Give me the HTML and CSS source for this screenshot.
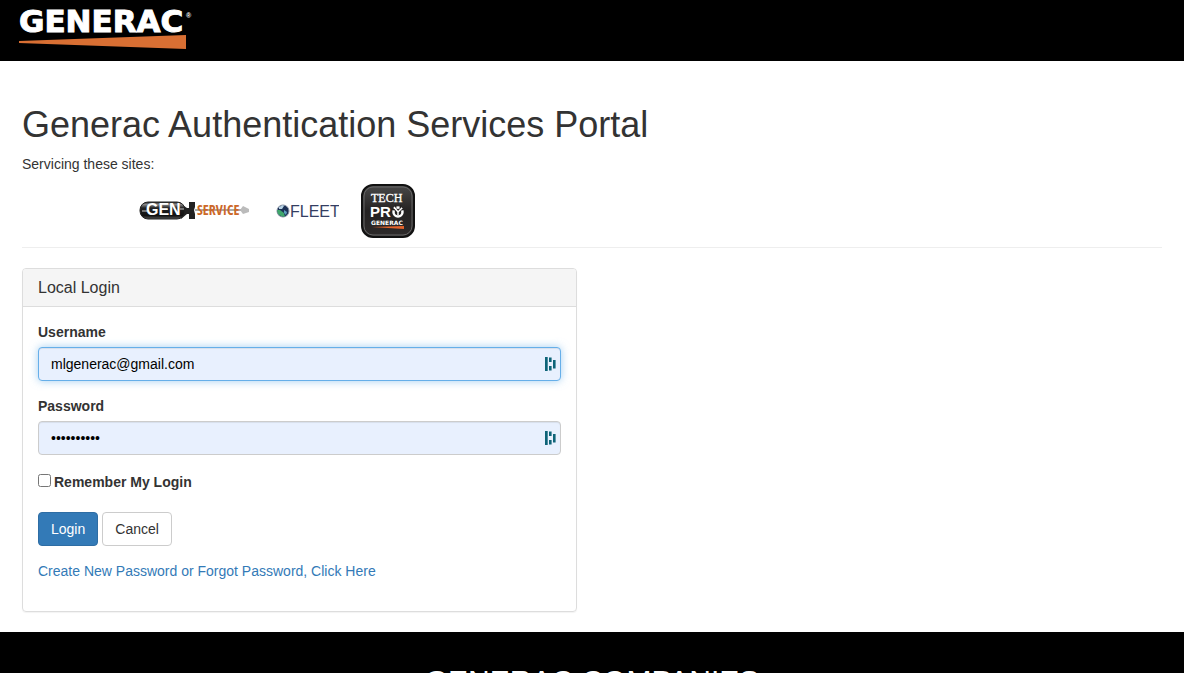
FILE: index.html
```html
<!DOCTYPE html>
<html lang="en">
<head>
<meta charset="UTF-8">
<meta name="viewport" content="width=device-width, initial-scale=1.0">
<title>Generac Authentication Services Portal</title>
<link rel="stylesheet" href="styles.css">
</head>
<body>
<header class="navbar">
  <a class="navbar-brand" href="#" aria-label="Generac">
    <svg width="180" height="46" viewBox="0 0 180 46">
      <text class="brand-text" x="0" y="26">GENERAC</text>
      <text class="brand-mark" x="167" y="12">®</text>
      <path fill="#d86f33" d="M0 35 L167 29 V43 L0 37 Z"/>
    </svg>
  </a>
</header>

<main class="container">
  <div class="page-header">
    <h1>Generac Authentication Services Portal</h1>
    <p>Servicing these sites:</p>
    <div class="sites">
      <svg class="site-gen" width="112" height="24" viewBox="0 0 112 24">
        <defs>
          <linearGradient id="barrel" x1="0" y1="0" x2="0" y2="1">
            <stop offset="0" stop-color="#222"/>
            <stop offset=".15" stop-color="#888"/>
            <stop offset=".35" stop-color="#222"/>
            <stop offset=".8" stop-color="#111"/>
            <stop offset="1" stop-color="#555"/>
          </linearGradient>
        </defs>
        <path fill="#aaa" d="M56 10h46v2H56z"/>
        <path fill="#bbb" d="M101 11l3-4 6 3v3l-6 2z"/>
        <path fill="#222" d="M42 5l6 4h2V3h6v5l-1 3 1 4v5h-6v-5h-2l-6 5z"/>
        <rect x="1" y="3" width="45" height="17" rx="8" fill="url(#barrel)" stroke="#222"/>
        <path fill="none" stroke="#ccc" d="M3 12h5M41 10h4"/>
        <text class="gen-text" x="7" y="16">GEN</text>
        <text class="service-text" x="58" y="16">SERVICE</text>
      </svg>
      <svg class="site-fleet" width="63" height="20" viewBox="0 0 63 20">
        <circle cx="7" cy="10" r="6" fill="#1c3157" stroke="#8a93a5"/>
        <path fill="#3fa66b" d="M1 9l3 0 4 3 1 4-4-1-3-2z"/>
        <path fill="#b8d3e5" d="M3 6l4-2 1 1-2 3-3 0z"/>
        <path fill="#5b9fc0" d="M8 9l3 2-1 3-2-2z"/>
        <text class="fleet-text" x="14" y="16">FLEET</text>
      </svg>
      <svg class="site-tech" width="54" height="54" viewBox="0 0 54 54">
        <defs>
          <linearGradient id="tile" x1="0" y1="0" x2="0" y2="1">
            <stop offset="0" stop-color="#494949"/>
            <stop offset=".5" stop-color="#242222"/>
            <stop offset="1" stop-color="#2d2a2a"/>
          </linearGradient>
        </defs>
        <rect x="1" y="1" width="52" height="52" rx="11" fill="url(#tile)" stroke="#111" stroke-width="2"/>
        <rect x="3" y="3" width="48" height="48" rx="9" fill="none" stroke="#666"/>
        <text class="tech-text" x="10" y="18">TECH</text>
        <text class="pro-text" x="9" y="33">PR</text>
        <circle cx="37" cy="28" r="4.500" fill="none" stroke="#fff" stroke-width="2.500"/>
        <path stroke="#242222" stroke-width="1.500" d="M34 21l1 4M40 21l-1 4M31 25l3 1M43 25l-3 1"/>
        <path fill="none" stroke="#fff" stroke-width="1.500" d="M33 23l4 5 4-4M37 28v3"/>
        <text class="tech-brand" x="10" y="41">GENERAC</text>
        <path fill="#e5642b" d="M11 43l32-1v3z"/>
      </svg>
    </div>
  </div>

  <section class="panel">
    <h2 class="panel-heading">Local Login</h2>
    <form class="panel-body">
      <div class="form-group">
        <label for="username">Username</label>
        <div class="field">
          <input class="form-control focused" type="text" id="username" value="mlgenerac@gmail.com">
          <svg class="field-icon" width="12" height="16" viewBox="0 0 12 16">
            <path fill="#0e6478" d="M1 1h2.700v14H1zM5 1.500h2.600v4.500H5zM5 10h2.600v4.500H5zM9 4h2.600v8.500H9z"/>
          </svg>
        </div>
      </div>
      <div class="form-group">
        <label for="password">Password</label>
        <div class="field">
          <input class="form-control" type="password" id="password" value="generac123">
          <svg class="field-icon" width="12" height="16" viewBox="0 0 12 16">
            <path fill="#0e6478" d="M1 1h2.700v14H1zM5 1.500h2.600v4.500H5zM5 10h2.600v4.500H5zM9 4h2.600v8.500H9z"/>
          </svg>
        </div>
      </div>
      <div class="remember">
        <input type="checkbox" id="remember">
        <label for="remember">Remember My Login</label>
      </div>
      <div class="buttons">
        <button type="submit" class="btn btn-primary">Login</button>
        <button type="button" class="btn">Cancel</button>
      </div>
      <a class="reset-link" href="#">Create New Password or Forgot Password, Click Here</a>
    </form>
  </section>
</main>

<footer class="footer">
  <h2>GENERAC COMPANIES</h2>
</footer>
</body>
</html>
```
FILE: styles.css
```css
* {
  box-sizing: border-box;
}
body {
  margin: 0;
  background: #fff;
  color: #333;
  font-family: "Liberation Sans", Arial, sans-serif;
  font-size: 14px;
  line-height: 20px;
}
.navbar {
  padding: 6px 19px 9px;
  background: #000;
}
.navbar-brand,
.navbar-brand svg,
.sites svg {
  display: block;
}
.brand-text {
  font: bold 31px "DejaVu Sans", sans-serif;
  fill: #fff;
  stroke: #fff;
}
.brand-mark {
  font: bold 7px "Liberation Sans", sans-serif;
  fill: #fff;
}
.container {
  padding: 44px 22px 20px;
}
.page-header {
  margin-bottom: 20px;
  padding-bottom: 9px;
  border-bottom: 1px solid #eee;
}
h1 {
  margin: 0 0 9px;
  font-size: 36px;
  font-weight: 500;
  line-height: 40px;
}
p {
  margin: 0 0 10px;
}
.sites {
  display: flex;
  align-items: center;
  padding-left: 117px;
}
.site-fleet {
  margin: 0 22px 0 25px;
}
.gen-text {
  font: bold 16px "Liberation Sans", sans-serif;
  fill: #fff;
}
.service-text {
  font: bold 14px "Open Sans Condensed", "Liberation Sans Narrow", "Liberation Sans", sans-serif;
  fill: #cc6828;
}
.fleet-text {
  font: 16px "Liberation Sans", sans-serif;
  fill: #343e63;
}
.tech-text {
  font: 12px "Liberation Serif", serif;
  fill: #fff;
  stroke: #fff;
  stroke-width: .3px;
}
.pro-text {
  font: bold 15px "Liberation Sans", sans-serif;
  fill: #fff;
}
.tech-brand {
  font: bold 6px "DejaVu Sans", sans-serif;
  fill: #fff;
}
.panel {
  width: calc(50% - 15px);
  border: 1px solid #ddd;
  border-radius: 4px;
  box-shadow: 0 1px 1px rgba(0, 0, 0, .05);
}
.panel-heading {
  margin: 0;
  padding: 9px 15px 8px;
  border-bottom: 1px solid #ddd;
  border-radius: 3px 3px 0 0;
  background: #f5f5f5;
  font-size: 16px;
  font-weight: 500;
}
.panel-body {
  padding: 15px 15px 30px;
}
.form-group {
  margin-bottom: 15px;
}
label {
  font-weight: bold;
}
.form-group label {
  display: block;
  margin-bottom: 5px;
}
.field {
  position: relative;
}
.form-control {
  display: block;
  width: 100%;
  height: 34px;
  padding: 6px 12px;
  border: 1px solid #ccc;
  border-radius: 4px;
  outline: 0;
  background: #e8f0fe;
  box-shadow: inset 0 1px 1px rgba(0, 0, 0, .075);
  color: #000;
  font: inherit;
}
.focused {
  border-color: #66afe9;
  box-shadow: inset 0 1px 1px rgba(0, 0, 0, .075), 0 0 8px rgba(102, 175, 233, .6);
}
/* icon sits over the right end of the input */
.field-icon {
  position: absolute;
  top: 9px;
  right: 5px;
}
.remember {
  display: flex;
  align-items: flex-start;
  gap: 3px;
  padding: 2px 0 20px;
}
.remember input {
  width: 13px;
  height: 13px;
  margin: 2px 0 0;
}
.buttons {
  display: flex;
  gap: 4px;
  margin-bottom: 15px;
}
.btn {
  padding: 6px 12px;
  border: 1px solid #ccc;
  border-radius: 4px;
  background: #fff;
  color: #333;
  font: inherit;
  cursor: pointer;
}
.btn-primary {
  border-color: #2e6da4;
  background: #337ab7;
  color: #fff;
}
.reset-link {
  color: #337ab7;
  text-decoration: none;
}
.footer {
  padding: 32px 22px 40px;
  background: #000;
  color: #fff;
  text-align: center;
}
.footer h2 {
  margin: 0;
  font-size: 30px;
  font-weight: 500;
  line-height: 33px;
}
```
